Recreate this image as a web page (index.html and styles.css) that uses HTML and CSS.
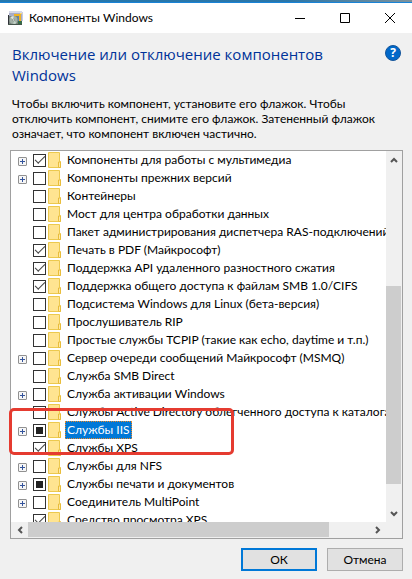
FILE: index.html
```html
<!DOCTYPE html>
<html lang="ru">
<head>
<meta charset="utf-8">
<meta name="viewport" content="width=device-width, initial-scale=1">
<title>Компоненты Windows</title>
<link rel="stylesheet" href="styles.css">
</head>
<body>
<div class="desktop-strip"></div>
<div class="window">
  <header class="titlebar">
    <svg class="app-icon" viewBox="0 0 16 16" aria-hidden="true">
      <path d="M1 1h13v13H1z" fill="#a9adc6"/>
      <path d="M1 1h13v2H1z" fill="#d5d8e6"/>
      <path d="M15 2v9h-1V2z" fill="#c9cce0"/>
      <path d="M6 4h7v8H6z" fill="#f0b323"/>
      <path d="M7 6h4v5H7z" fill="#5a82bd"/>
      <path d="M12 3h2v1h-2z" fill="#f7d774"/>
      <path d="M10 11h4v4h-4z" fill="#376b49"/>
      <path d="M0 5h1v10H0z" fill="#2f3138"/>
      <path d="M1 6h9v9H1z" fill="#76827b"/>
      <path d="M0 14h14v1H0z" fill="#46554c"/>
      <circle cx="5.500" cy="10" r="4" fill="#a3b0a7"/>
      <path d="M5.500 10 2.500 7.500A4 4 0 0 1 5.500 6z" fill="#dfe6e0"/>
      <path d="m5.500 10 3 3A4 4 0 0 1 5.500 14z" fill="#c4d3c8"/>
      <circle cx="5.500" cy="10" r="1" fill="#fff" stroke="#66736c" stroke-width=".6"/>
    </svg>
    <h1 class="title">Компоненты Windows</h1>
    <div class="caption-buttons">
      <button class="caption-button" aria-label="Свернуть"><svg viewBox="0 0 10 10"><path d="M0 5.500h10"/></svg></button>
      <button class="caption-button" aria-label="Развернуть"><svg viewBox="0 0 10 10"><path d="M.5.500h9v9h-9z"/></svg></button>
      <button class="caption-button" aria-label="Закрыть"><svg viewBox="0 0 10 10"><path d="m0 0 10 10M10 0 0 10"/></svg></button>
    </div>
  </header>
  <main class="content">
    <div class="heading-row">
      <h2 class="heading">Включение или отключение компонентов Windows</h2>
      <button class="help" aria-label="Справка">?</button>
    </div>
    <p class="description">Чтобы включить компонент, установите его флажок. Чтобы отключить компонент, снимите его флажок. Затененный флажок означает, что компонент включен частично.</p>
    <div class="tree">
      <ul class="items" id="items"></ul>
      <div class="scroll vertical">
        <button class="arrow" aria-label="Вверх"><svg viewBox="0 0 8 8"><path d="M1 6 4 3l3 3"/></svg></button>
        <div class="track"><div class="before"></div><div class="thumb"></div><div class="after"></div></div>
        <button class="arrow" aria-label="Вниз"><svg viewBox="0 0 8 8"><path d="m1 2 3 3 3-3"/></svg></button>
      </div>
      <div class="scroll horizontal">
        <button class="arrow" aria-label="Влево"><svg viewBox="0 0 8 8"><path d="M6 1 3 4l3 3"/></svg></button>
        <div class="track"><div class="thumb"></div><div class="after"></div></div>
        <button class="arrow" aria-label="Вправо"><svg viewBox="0 0 8 8"><path d="m2 1 3 3-3 3"/></svg></button>
      </div>
    </div>
    <footer class="actions">
      <button class="action primary">ОК</button>
      <button class="action">Отмена</button>
    </footer>
  </main>
</div>
<script src="script.js"></script>
</body>
</html>
```
FILE: styles.css
```css
* {
  box-sizing: border-box;
}

body {
  margin: 0;
  height: 100vh;
  display: flex;
  flex-direction: column;
  background: #f0f0f0;
  color: #000;
  font: 12px/18px Lato, "Open Sans", sans-serif;
}

button {
  padding: 0;
  border: 0;
  background: none;
  color: inherit;
  font: inherit;
}

svg {
  display: block;
}

.desktop-strip {
  height: 2px;
  flex: none;
  background: linear-gradient(90deg, #2478ae, #2b76a8 70%, #7d929c);
}

.window {
  flex: 1;
  min-height: 0;
  display: flex;
  flex-direction: column;
  border-top: 1px solid #1883d7;
}

.titlebar {
  height: 30px;
  flex: none;
  display: flex;
  align-items: center;
  padding-left: 8px;
  background: #fff;
}

.app-icon {
  width: 16px;
  height: 16px;
}

.title {
  margin: 0 0 0 5px;
  flex: 1;
  font-size: 12px;
  font-weight: 400;
}

.caption-buttons {
  display: flex;
}

.caption-button {
  width: 45px;
  height: 28px;
  display: grid;
  place-items: center;
}

.caption-button svg {
  width: 10px;
  height: 10px;
  fill: none;
  stroke: #000;
}

.content {
  flex: 1;
  min-height: 0;
  display: flex;
  flex-direction: column;
  padding: 11px 9px 8px 10px;
}

.heading-row {
  display: flex;
  justify-content: space-between;
  align-items: flex-start;
  padding-left: 2px;
}

.heading {
  margin: 0;
  color: #039;
  font-family: "Open Sans", sans-serif;
  font-size: 15px;
  line-height: 21px;
  font-weight: 400;
}

.help {
  width: 16px;
  height: 16px;
  flex: none;
  margin: 1px 2px 0 0;
  border: 1px solid #15559a;
  border-radius: 50%;
  background: #0068c9;
  color: #fff;
  font: 700 12px/14px "Open Sans", sans-serif;
}

.description {
  margin: 10px 16px 9px 2px;
  line-height: 15px;
}

.tree {
  flex: 1;
  min-height: 0;
  position: relative;
  display: grid;
  grid-template: minmax(0, 1fr) 16px / minmax(0, 1fr) 16px;
  border: 1px solid #a0a0a0;
}

.items {
  margin: 0;
  padding: 0;
  overflow: hidden;
  background: #fff;
  list-style: none;
}

.item {
  height: 18px;
  display: flex;
  align-items: center;
  padding-left: 7px;
  white-space: nowrap;
}

.expander {
  width: 9px;
  height: 9px;
  flex: none;
  margin: 3px 6px 0 0;
}

.check {
  appearance: none;
  width: 13px;
  height: 13px;
  flex: none;
  margin: 0 2px 0 0;
  display: grid;
  place-items: center;
  border: 1px solid #333;
  background: #fff;
}

.check:checked::before {
  content: "";
  width: 9px;
  height: 4px;
  margin-bottom: 3px;
  border: solid #444;
  border-width: 0 0 1px 1px;
  transform: rotate(-45deg);
}

.check:indeterminate::before {
  content: "";
  width: 7px;
  height: 7px;
  background: #222;
}

.folder {
  width: 13px;
  height: 16px;
  flex: none;
}

.name {
  margin-left: 4px;
  padding: 0 2px;
  line-height: 18px;
}

.selected .name {
  outline: 1px dotted #e88728;
  outline-offset: -1px;
  background: #0078d7;
  color: #fff;
}

.highlight {
  position: absolute;
  top: 257px;
  left: -2px;
  width: 225px;
  height: 47px;
  border: 3px solid #e53b30;
  border-radius: 5px;
  pointer-events: none;
}

.scroll {
  display: flex;
  background: #f0f0f0;
}

.vertical {
  flex-direction: column;
  padding-right: 1px;
}

.horizontal {
  grid-column: span 2;
  padding: 0 16px 1px 0;
}

.track {
  flex: 1;
  display: flex;
  flex-direction: inherit;
}

.thumb {
  background: #cdcdcd;
}

.vertical .before {
  flex: 118;
}

.vertical .thumb {
  flex: 198;
}

.vertical .after {
  flex: 21;
}

.horizontal .thumb {
  flex: 301;
}

.horizontal .after {
  flex: 40;
}

.arrow {
  flex: 0 0 17px;
  display: grid;
  place-items: center;
}

.arrow svg {
  width: 8px;
  height: 8px;
  fill: none;
  stroke: #555;
  stroke-width: 2;
}

.actions {
  display: flex;
  justify-content: flex-end;
  gap: 10px;
  padding: 9px 0 0;
}

.action {
  width: 76px;
  height: 23px;
  border: 1px solid #adadad;
  background: #e1e1e1;
  line-height: 20px;
}

.primary {
  border: 2px solid #0078d7;
}
```
FILE: script.js
```js
// [name, state, expandable]; state: 0 = off, 1 = on, 2 = partly on
const items = [
  ["Компоненты для работы с мультимедиа", 1, true],
  ["Компоненты прежних версий", 0, true],
  ["Контейнеры", 0],
  ["Мост для центра обработки данных", 0],
  ["Пакет администрирования диспетчера RAS-подключений", 0],
  ["Печать в PDF (Майкрософт)", 1],
  ["Поддержка API удаленного разностного сжатия", 1],
  ["Поддержка общего доступа к файлам SMB 1.0/CIFS", 1],
  ["Подсистема Windows для Linux (бета-версия)", 0],
  ["Прослушиватель RIP", 0],
  ["Простые службы TCPIP (такие как echo, daytime и т.п.)", 0],
  ["Сервер очереди сообщений Майкрософт (MSMQ)", 0, true],
  ["Служба SMB Direct", 0],
  ["Служба активации Windows", 0, true],
  ["Службы Active Directory облегченного доступа к каталогам", 0],
  ["Службы IIS", 2, true],
  ["Службы XPS", 1],
  ["Службы для NFS", 0, true],
  ["Службы печати и документов", 2, true],
  ["Соединитель MultiPoint", 0, true],
  ["Средство просмотра XPS", 1],
];

const plus = '<rect x=".5" y=".5" width="8" height="8" rx=".5" fill="#f6f6f6" stroke="#919191"/><path d="M2 4.5h5M4.5 2v5" stroke="#34549c"/>';
const folder = '<svg class="folder" viewBox="0 0 13 16" aria-hidden="true"><path d="M.5.5h11v9h1v6H.5z" fill="#ffe491" stroke="#ecc94e"/><path d="M10.500 15.500v-5.500h2v5.500z" fill="#ffe9a6" stroke="#e8bd3c"/></svg>';

const list = document.getElementById("items");
items.forEach(([name, state, expandable], i) => {
  const row = document.createElement("li");
  row.className = "item" + (name === "Службы IIS" ? " selected" : "");
  row.innerHTML = `<svg class="expander" viewBox="0 0 9 9" aria-hidden="true">${expandable ? plus : ""}</svg>
    <input class="check" type="checkbox" id="item-${i}">${folder}
    <label class="name" for="item-${i}">${name}</label>`;
  const check = row.querySelector("input");
  check.checked = state === 1;
  check.indeterminate = state === 2;
  list.append(row);
});

const highlight = document.createElement("div");
highlight.className = "highlight";
list.parentElement.append(highlight);
```
